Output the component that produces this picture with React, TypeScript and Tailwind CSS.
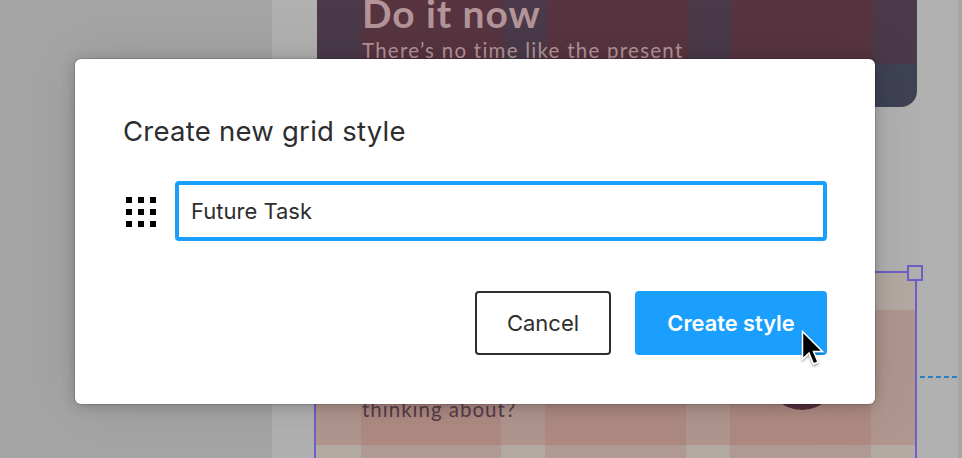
export default function App() {
  const lato = "font-['Lato','Liberation_Sans',sans-serif]";
  return (
    <div className="relative w-[962px] h-[458px] overflow-hidden bg-[#b1b1b1] font-['Inter','Liberation_Sans',sans-serif]">
      {/* canvas behind the modal */}
      <div className="absolute left-0 top-0 w-[272px] h-[458px] bg-[#a5a5a5]" />
      <div className="absolute left-[958px] top-0 w-[4px] h-[458px] bg-[#a6a6a6]" />

      {/* top frame */}
      <div className="absolute left-[317px] top-[-60px] w-[600px] h-[167px] rounded-b-[16px] overflow-hidden bg-[#3f4253]">
        <div className="flex h-[124px]">
          <div className="w-[44px] bg-[#4a3a4a]" />
          <div className="w-[142px] bg-[#573440]" />
          <div className="w-[44px] bg-[#4a3a4a]" />
          <div className="w-[142px] bg-[#573440]" />
          <div className="w-[42px] bg-[#4a3a4a]" />
          <div className="w-[142px] bg-[#573440]" />
          <div className="flex-1 bg-[#4a3a4a]" />
        </div>
      </div>
      <div className={`absolute left-[362px] top-[-10px] ${lato}`}>
        <div className="text-[39px] leading-[46px] font-bold tracking-[0.9px] text-[#b3959a]">Do it now</div>
        <div className="mt-[2px] text-[20.5px] leading-[24px] tracking-[1.25px] text-[#b39599]">There’s no time like the present</div>
      </div>

      {/* lower frame */}
      <div className="absolute left-[315px] top-[272px] w-[601px] h-[186px] overflow-hidden bg-[#b3aba3]">
        <div className="absolute left-0 top-[38px] w-full h-[135px] bg-[#a8605a]/28" />
        <div className="absolute inset-0 flex">
          <div className="w-[46px]" />
          <div className="w-[140px] bg-[#a8605a]/22" />
          <div className="w-[44px]" />
          <div className="w-[141px] bg-[#a8605a]/22" />
          <div className="w-[44px]" />
          <div className="w-[141px] bg-[#a8605a]/22" />
        </div>
        <div className="absolute left-[449px] top-[62px] w-[76px] h-[76px] rounded-full bg-[#54303f]" />
        <div className="absolute left-[455px] top-[130px] w-px h-[8px] bg-[#b97a78]" />
        <div className="absolute left-[510px] top-[130px] w-px h-[8px] bg-[#b97a78]" />
        <div className={`absolute left-[47px] top-[125px] text-[20.5px] leading-[24px] tracking-[1px] text-[#553b4a] ${lato}`}>thinking about?</div>
      </div>
      <div className="absolute left-[314px] top-[271px] w-[603px] h-[187px] border-x-2 border-t-2 border-[#6f5fc6]" />
      <div className="absolute left-[907px] top-[265px] w-[16px] h-[16px] border-2 border-[#6f5fc6] bg-[#b1b1b1]" />
      <svg className="absolute left-[918px] top-[375px]" width="40" height="4" viewBox="0 0 40 4">
        <line x1="2" y1="2" x2="40" y2="2" stroke="#2a80c2" strokeWidth="2" strokeDasharray="5 3" />
      </svg>

      {/* modal */}
      <div className="absolute left-[75px] top-[59px] w-[800px] h-[345px] rounded-[6px] bg-white px-[48px] pt-[52px] shadow-[0_0_0_1px_rgba(0,0,0,0.12),0_2px_14px_rgba(0,0,0,0.2),0_0_60px_rgba(0,0,0,0.1)]">
        <h1 className="text-[27.5px] leading-[40px] font-normal text-[#2e2e2e] tracking-[0.25px]">Create new grid style</h1>
        <div className="mt-[30px] flex items-center">
          <svg width="52" height="60" viewBox="0 0 52 60" className="shrink-0">
            {[3, 15, 27].map((x) =>
              [16, 28, 40].map((y) => <rect key={`${x}-${y}`} x={x} y={y} width="6" height="6" fill="#000" />)
            )}
          </svg>
          <div className="flex h-[60px] flex-1 items-center rounded-[4px] border-[4px] border-[#1a9fff] pl-[12px] text-[22px] text-[#2e2e2e]">
            Future Task
          </div>
        </div>
        <div className="mt-[50px] flex justify-end gap-[24px]">
          <button className="h-[64px] w-[136px] rounded-[4px] border-2 border-[#2e2e2e] bg-white text-[22px] text-[#2e2e2e]">Cancel</button>
          <button className="h-[64px] w-[192px] rounded-[4px] bg-[#1a9fff] text-[21.8px] font-semibold text-white">Create style</button>
        </div>
      </div>

      {/* cursor */}
      <svg className="absolute left-[798px] top-[328px]" width="30" height="42" viewBox="0 0 30 42">
        <defs>
          <filter id="s" x="-30%" y="-30%" width="160%" height="160%">
            <feDropShadow dx="0" dy="1.5" stdDeviation="1.2" floodColor="#000" floodOpacity="0.45" />
          </filter>
        </defs>
        <path d="M4.5 3.5 V31 L11 25 L15.5 36 L20 34 L15.5 23.5 H24.5 Z" fill="#000" stroke="#fff" strokeWidth="1.5" filter="url(#s)" />
      </svg>
    </div>
  );
}
